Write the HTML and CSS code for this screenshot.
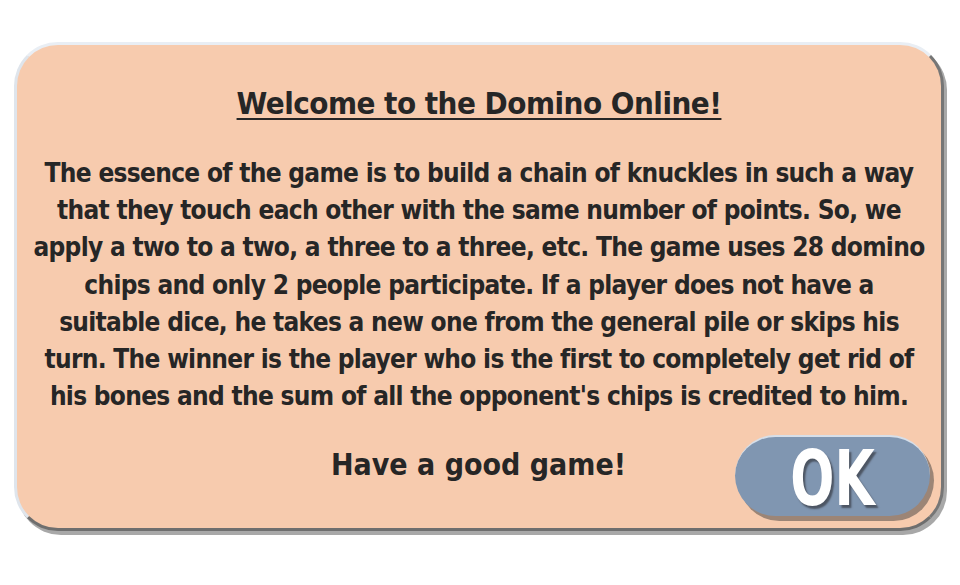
FILE: index.html
```html
<!DOCTYPE html>
<html>
<head>
<meta charset="utf-8">
<link rel="stylesheet" href="styles.css">
</head>
<body>
<div class="panel">
  <h1 class="title">Welcome to the Domino Online!</h1>
  <p class="text">The essence of the game is to build a chain of knuckles in such a way<br>that they touch each other with the same number of points. So, we<br>apply a two to a two, a three to a three, etc. The game uses 28 domino<br>chips and only 2 people participate. If a player does not have a<br>suitable dice, he takes a new one from the general pile or skips his<br>turn. The winner is the player who is the first to completely get rid of<br>his bones and the sum of all the opponent's chips is credited to him.</p>
  <div class="footer">
    <span></span>
    <span class="wish">Have a good game!</span>
    <button class="ok"><span class="ok-label">OK</span></button>
  </div>
</div>
</body>
</html>
```
FILE: styles.css
```css
html, body {
  margin: 0;
  padding: 0;
  background: #ffffff;
}
body {
  width: 960px;
  height: 585px;
  font-family: "DejaVu Sans Condensed", "DejaVu Sans", sans-serif;
  font-stretch: condensed;
  color: #262626;
}
.panel {
  box-sizing: border-box;
  margin: 42px 0 0 14px;
  width: 930px;
  height: 489px;
  background: #f7cbae;
  border: 3px solid;
  border-color: #e9eef4 #767676 #6e6e6e #dfe5ec;
  border-radius: 44px;
  box-shadow: 3px 4px 0 #a8a8a8;
  display: flex;
  flex-direction: column;
  align-items: center;
  padding: 38px 10px 0;
}
.title {
  margin: 0;
  font-size: 31px;
  font-weight: bold;
  letter-spacing: -0.5px;
  line-height: 40px;
  text-decoration: underline;
  text-decoration-thickness: 2px;
  text-underline-offset: 4px;
}
.text {
  margin: 32px 0 0;
  font-size: 26px;
  font-weight: bold;
  letter-spacing: -0.7px;
  line-height: 37.2px;
  text-align: center;
  white-space: nowrap;
}
.footer {
  align-self: stretch;
  display: grid;
  grid-template-columns: 1fr auto 1fr;
  align-items: start;
  margin-top: 20px;
  margin-right: 1px;
}
.wish {
  font-size: 30px;
  font-weight: bold;
  line-height: 40px;
  margin-top: 10px;
}
.ok {
  justify-self: end;
  width: 195px;
  height: 81px;
  border: none;
  border-top: 2px solid #d7dfe9;
  border-radius: 41px;
  background: #8096b1;
  box-shadow: 4px 5px 0 #9c8576;
  padding: 4px 0 0;
  display: flex;
  align-items: center;
  justify-content: center;
}
.ok-label {
  display: inline-block;
  color: #ffffff;
  font-family: "DejaVu Sans Condensed", "DejaVu Sans", sans-serif;
  font-stretch: condensed;
  font-weight: bold;
  font-size: 76px;
  line-height: 76px;
  transform: scaleX(0.76);
  text-shadow: 3px 3px 2px #4c5563;
}
```
